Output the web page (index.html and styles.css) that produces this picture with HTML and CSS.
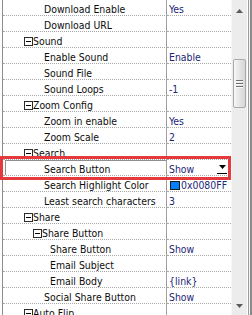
FILE: index.html
```html
<!DOCTYPE html>
<html>
<head>
<meta charset="utf-8">
<link rel="stylesheet" href="styles.css">
</head>
<body>
<div class="frame">
  <div class="grid">
    <div class="rows">
      <div class="row"><div class="name l1">Download Enable</div><div class="val">Yes</div></div>
      <div class="row"><div class="name l1">Download URL</div><div class="val"></div></div>
      <div class="row"><div class="name c1"><svg class="tog" width="9" height="9" viewBox="0 0 9 9"><rect x="0.5" y="0.5" width="8" height="8" fill="#fff" stroke="#2b2b2b"/><line x1="2" y1="4.5" x2="7" y2="4.5" stroke="#000"/></svg>Sound</div><div class="val"></div></div>
      <div class="row"><div class="name l1">Enable Sound</div><div class="val">Enable</div></div>
      <div class="row"><div class="name l1">Sound File</div><div class="val"></div></div>
      <div class="row"><div class="name l1">Sound Loops</div><div class="val">-1</div></div>
      <div class="row"><div class="name c1"><svg class="tog" width="9" height="9" viewBox="0 0 9 9"><rect x="0.5" y="0.5" width="8" height="8" fill="#fff" stroke="#2b2b2b"/><line x1="2" y1="4.5" x2="7" y2="4.5" stroke="#000"/></svg>Zoom Config</div><div class="val"></div></div>
      <div class="row"><div class="name l1">Zoom in enable</div><div class="val">Yes</div></div>
      <div class="row"><div class="name l1">Zoom Scale</div><div class="val">2</div></div>
      <div class="row"><div class="name c1"><svg class="tog" width="9" height="9" viewBox="0 0 9 9"><rect x="0.5" y="0.5" width="8" height="8" fill="#fff" stroke="#2b2b2b"/><line x1="2" y1="4.5" x2="7" y2="4.5" stroke="#000"/></svg>Search</div><div class="val"></div></div>
      <div class="row sel"><div class="name l1">Search Button</div><div class="val">Show<span class="drop"><svg width="7" height="4" viewBox="0 0 7 4"><polygon points="0,0 7,0 3.5,4" fill="#000"/></svg></span></div></div>
      <div class="row"><div class="name l1">Search Highlight Color</div><div class="val"><span class="swatch"></span>0x0080FF</div></div>
      <div class="row"><div class="name l1">Least search characters</div><div class="val">3</div></div>
      <div class="row"><div class="name c1"><svg class="tog" width="9" height="9" viewBox="0 0 9 9"><rect x="0.5" y="0.5" width="8" height="8" fill="#fff" stroke="#2b2b2b"/><line x1="2" y1="4.5" x2="7" y2="4.5" stroke="#000"/></svg>Share</div><div class="val"></div></div>
      <div class="row"><div class="name c2"><svg class="tog" width="9" height="9" viewBox="0 0 9 9"><rect x="0.5" y="0.5" width="8" height="8" fill="#fff" stroke="#2b2b2b"/><line x1="2" y1="4.5" x2="7" y2="4.5" stroke="#000"/></svg>Share Button</div><div class="val"></div></div>
      <div class="row"><div class="name l2">Share Button</div><div class="val">Show</div></div>
      <div class="row"><div class="name l2">Email Subject</div><div class="val"></div></div>
      <div class="row"><div class="name l2">Email Body</div><div class="val">{link}</div></div>
      <div class="row"><div class="name l1">Social Share Button</div><div class="val">Show</div></div>
      <div class="row"><div class="name c1"><svg class="tog" width="9" height="9" viewBox="0 0 9 9"><rect x="0.5" y="0.5" width="8" height="8" fill="#fff" stroke="#2b2b2b"/><line x1="2" y1="4.5" x2="7" y2="4.5" stroke="#000"/></svg>Auto Flip</div><div class="val"></div></div>
    </div>
  </div>
  <div class="sb">
    <div class="sb-btn up"><svg width="7" height="4" viewBox="0 0 7 4"><polygon points="0,4 7,4 3.5,0" fill="#5a5a5a"/></svg></div>
    <div class="sb-gap"></div>
    <div class="thumb"><span class="grip"></span><span class="grip"></span><span class="grip"></span></div>
    <div class="sb-fill"></div>
    <div class="sb-btn down"><svg width="7" height="4" viewBox="0 0 7 4"><polygon points="0,0 7,0 3.5,4" fill="#5a5a5a"/></svg></div>
  </div>
  <div class="edge"></div>
  <div class="mark"></div>
</div>
</body>
</html>
```
FILE: styles.css
```css
html, body {
  margin: 0;
  padding: 0;
  background: #fff;
}
.frame {
  position: relative;
  width: 252px;
  height: 315px;
  overflow: hidden;
  display: flex;
  font-family: "DejaVu Sans Condensed", "DejaVu Sans", sans-serif;
  font-stretch: condensed;
  font-size: 10.4px;
}
.grid {
  width: 231px;
  flex: none;
  padding-left: 2px;
  box-sizing: border-box;
}
.rows {
  border-left: 1px solid #8c8c8c;
  height: 100%;
}
.row {
  display: grid;
  grid-template-columns: 164px 64px;
  height: 16px;
}
.name, .val {
  height: 16px;
  box-sizing: border-box;
  border-bottom: 1px dotted #a8a8a8;
  padding-top: 3px;
  line-height: 12px;
  white-space: nowrap;
  overflow: hidden;
}
.name {
  border-right: 1px solid #a0a0a0;
  color: #0c0c0c;
}
.l1 { padding-left: 41px; }
.l2 { padding-left: 47px; }
.c1 { padding-left: 21px; }
.c2 { padding-left: 30px; }
.tog {
  vertical-align: -1px;
  margin-right: 0;
}
.val {
  color: #1c2676;
  padding-left: 2px;
  position: relative;
}
.sel .name {
  position: relative;
}
.sel .name::before {
  content: "";
  position: absolute;
  left: 2px;
  top: 0;
  right: 0;
  bottom: 0;
  border-left: 1px solid #8f8f8f;
  border-top: 1px solid #8f8f8f;
}
.drop {
  position: absolute;
  right: 4px;
  top: 1px;
  width: 10px;
  height: 12px;
  border-bottom: 1px solid #000;
  display: flex;
  align-items: center;
  justify-content: center;
}
.swatch {
  display: inline-block;
  width: 8px;
  height: 7px;
  background: #0080ff;
  border: 1px solid #1a1a1a;
  vertical-align: -1px;
  margin: 0 1px 0 1px;
}
.sb {
  width: 16px;
  flex: none;
  background: #ececec;
  border-left: 1px solid #f7f7f7;
  box-sizing: border-box;
  display: flex;
  flex-direction: column;
}
.sb-btn {
  height: 17px;
  display: flex;
  justify-content: center;
  flex: none;
}
.sb-btn.up { align-items: flex-start; padding-top: 9px; box-sizing: border-box; }
.sb-btn.down { align-items: flex-start; padding-top: 6px; box-sizing: border-box; }
.sb-gap { height: 42px; flex: none; }
.sb-fill { flex: 1; }
.thumb {
  height: 49px;
  flex: none;
  margin-left: 1px;
  width: 13px;
  box-sizing: border-box;
  border: 1px solid #a9a9a9;
  border-radius: 2px;
  background: linear-gradient(to right, #f6f6f6, #e2e2e2 60%, #d6d6d6);
  display: flex;
  flex-direction: column;
  align-items: center;
  justify-content: center;
  gap: 2px;
}
.grip {
  width: 7px;
  height: 1px;
  background: #6e6e6e;
  box-shadow: 0 1px 0 #fafafa;
}
.edge {
  width: 5px;
  flex: none;
  background: linear-gradient(to right, #fff 0, #fff 1px, #9c9c9c 1px, #9c9c9c 2px, #f4f4f4 2px, #f4f4f4 3px, #8a8a8a 3px);
}
.mark {
  position: absolute;
  left: 0;
  top: 156px;
  width: 231px;
  height: 24px;
  box-sizing: border-box;
  border: 3px solid #e5393e;
}
```
